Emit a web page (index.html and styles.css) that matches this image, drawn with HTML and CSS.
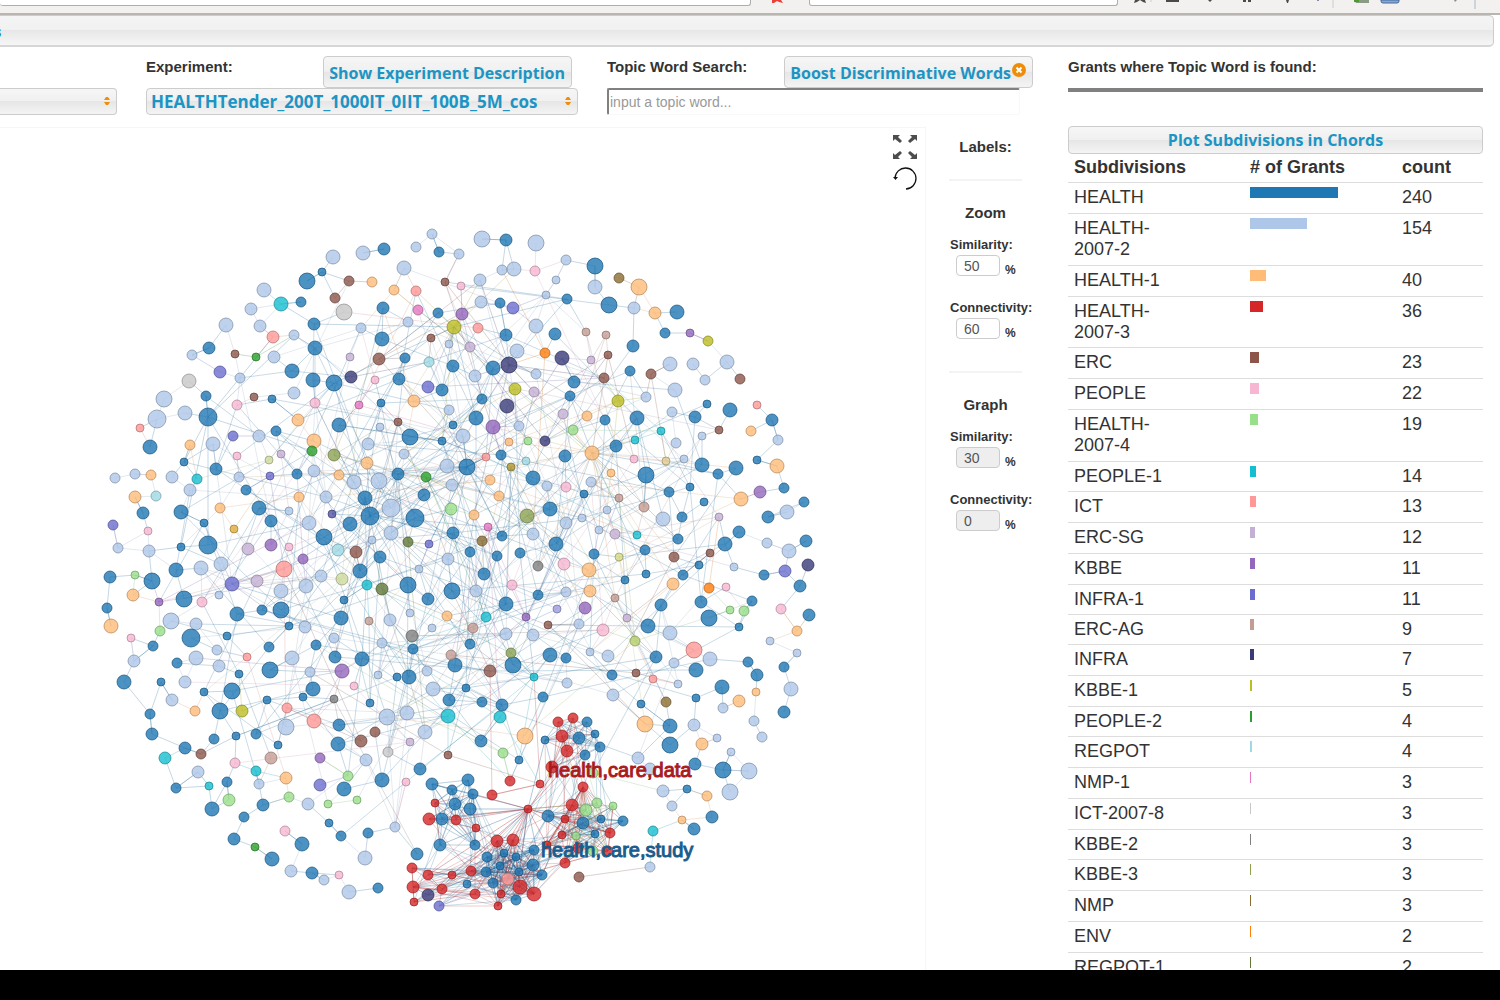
FILE: index.html
```html
<!DOCTYPE html>
<html lang="en">
<head>
<meta charset="utf-8">
<title>Topic graph</title>
<link rel="stylesheet" href="styles.css">
</head>
<body>
<div class="toolbar">
  <div class="url-field"></div>
  <svg class="stop-icon" width="14" height="4" viewBox="0 0 14 4"><path d="M2 0h9l2 3-4-1-2 -1-3 2-2 0z" fill="#e8413c"/></svg>
  <div class="find-field"></div>
  <svg class="toolbar-icons" width="382" height="14" viewBox="0 0 382 14">
    <g fill="#4a4a4a">
      <path d="M17 0l-1 3 3-1 3-2 3 2 3 1-1-3z"/>
      <path d="M48 0h13v2H48zM90 0h4l-2 2zM125 0h3v2h-3zM130 0h3v2h-3zM168 0h3l-1 3h-1z"/>
    </g>
    <path d="M199 0h2v1h-2zM336 0h3l-2 2z" fill="#8a8aa0"/>
    <path d="M236 0h15v3h-13z" fill="#8b9b86"/>
    <path d="M236 0h5v2h-5z" fill="#4d9a2d"/>
    <path d="M263 0h18v1q0 2-2 2h-14q-2 0-2-2z" fill="#86a9d4" stroke="#44699c"/>
    <path d="M33 0v2M215 0v8" stroke="#d0cdca"/>
    <path d="M357 0v9" stroke="#a9b8c8"/>
  </svg>
</div>
<nav class="ribbon"><a href="#topics">s</a></nav>

<form class="filters">
  <div class="filter">
    <div class="filter-head"></div>
    <div class="picker"><select aria-label="Collection"><option></option></select>
      <svg class="picker-arrows" width="6" height="8" viewBox="0 0 6 8"><path d="M0 3l2-3h2l2 3zM0 5h6l-2 3h-2z"/></svg></div>
  </div>
  <div class="filter">
    <div class="filter-head"><label for="experiment">Experiment:</label><button type="button" class="btn">Show Experiment Description</button></div>
    <div class="picker"><select id="experiment"><option>HEALTHTender_200T_1000IT_0IIT_100B_5M_cos</option></select>
      <svg class="picker-arrows" width="6" height="8" viewBox="0 0 6 8"><path d="M0 3l2-3h2l2 3zM0 5h6l-2 3h-2z"/></svg></div>
  </div>
  <div class="filter">
    <div class="filter-head"><label for="word">Topic Word Search:</label><button type="button" class="btn btn-boost">Boost Discriminative Words<svg width="14" height="14" viewBox="0 0 14 14"><circle cx="7" cy="7" r="7" fill="#ef8c08"/><path d="M4.500 4.500l5 5M9.500 4.500l-5 5" stroke="#fff" stroke-width="2"/></svg></button></div>
    <input id="word" class="word" type="text" placeholder="input a topic word...">
  </div>
  <div class="filter">
    <div class="filter-head"><span>Grants where Topic Word is found:</span></div>
    <hr class="rule">
  </div>
</form>

<main class="content">
  <section class="graph">
    <svg id="graph" viewBox="0 128 925 842" preserveAspectRatio="xMinYMin meet" role="img" aria-label="Topic similarity graph"></svg>
    <div class="graph-tools">
      <button type="button" aria-label="Full screen"><svg width="24" height="24" viewBox="0 0 24 24" fill="#4d4d4d"><path d="M0 0h7l-2 2 4 4-2 2-5-4-2 2zM24 0h-7l2 2-4 4 2 2 5-4 2 2zM0 24h7l-2-2 4-4-2-2-5 4-2-2zM24 24h-7l2-2-4-4 2-2 5 4 2-2z"/></svg></button>
      <button type="button" aria-label="Reset"><svg width="24" height="24" viewBox="0 0 24 24"><path d="M2 11A10.500 10.500 0 1 1 13 22" fill="none" stroke="#111" stroke-width="1.300"/><path d="M0 10h5l-2.500 3z" fill="#111"/></svg></button>
    </div>
  </section>

  <aside class="labels">
    <h2>Labels:</h2>
    <hr>
    <h2>Zoom</h2>
    <div class="setting"><label for="zs">Similarity:</label><div><input id="zs" type="text" value="50"><span>%</span></div></div>
    <div class="setting"><label for="zc">Connectivity:</label><div><input id="zc" type="text" value="60"><span>%</span></div></div>
    <hr class="hr-late">
    <h2>Graph</h2>
    <div class="setting"><label for="gs">Similarity:</label><div><input id="gs" type="text" value="30" disabled><span>%</span></div></div>
    <div class="setting"><label for="gc">Connectivity:</label><div><input id="gc" type="text" value="0" disabled><span>%</span></div></div>
  </aside>

  <section class="grants">
    <button type="button" class="btn btn-wide">Plot Subdivisions in Chords</button>
    <table>
      <thead><tr><th class="c-name">Subdivisions</th><th class="c-bar"># of Grants</th><th>count</th></tr></thead>
      <tbody id="rows"></tbody>
    </table>
  </section>
</main>
<footer class="strip"></footer>
<script src="graph.js"></script>
</body>
</html>
```
FILE: styles.css
```css
* { box-sizing: border-box; }
body {
  margin: 0;
  height: 100vh;
  display: flex;
  flex-direction: column;
  overflow: hidden;
  background: #fff;
  color: #333;
  font: 15px/20px "Liberation Sans", Arial, sans-serif;
}
button, input, select { margin: 0; font: inherit; }
h2 { margin: 0; font-size: 15px; line-height: 20px; text-align: center; }

.toolbar {
  flex: none;
  height: 15px;
  display: flex;
  align-items: flex-start;
  background: #f2f1ef;
  border-bottom: 2px solid #b9b6b2;
}
.url-field, .find-field {
  height: 6px;
  background: #fff;
  border: 1px solid #b0aeab;
  border-top: 0;
  border-radius: 0 0 3px 3px;
}
.url-field { flex: 1 1 0; border-left: 0; }
.stop-icon { margin: 0 25px 0 19px; }
.find-field { width: 309px; }

.ribbon {
  flex: none;
  height: 32px;
  margin-right: 6px;
  padding: 7px 0;
  overflow: hidden;
  border: 1px solid #ccc;
  border-bottom: 2px solid #d6d6d6;
  border-left: 0;
  border-radius: 0 5px 5px 0;
  background: linear-gradient(#f4f4f4 0%, #f1f1f1 48%, #e7e7e7 50%, #f6f6f6 100%);
}
.ribbon a {
  display: block;
  margin-left: -6px;
  color: #1c94c4;
  font-family: "Trebuchet MS", "Open Sans", sans-serif;
  font-weight: 700;
  line-height: 16px;
  text-decoration: none;
}

.filters {
  flex: none;
  display: grid;
  grid-template-columns: 117fr 432fr 432fr 432fr;
  column-gap: 29px;
  padding: 9px 0 11px;
}
.filter { min-width: 0; }
.filter-head {
  display: flex;
  justify-content: space-between;
  height: 32px;
  font-weight: bold;
  white-space: nowrap;
}
.filter-head label, .filter-head span { padding-top: 1px; }
.btn {
  height: 32px;
  margin-right: 6px;
  padding: 1px 6px 0 5px;
  border: 1px solid #ccc;
  border-radius: 4px;
  background: linear-gradient(#f6f6f6 0%, #f0f0f0 48%, #e6e6e6 50%, #f4f4f4 100%);
  color: #1c94c4;
  font: 700 16px/20px "Trebuchet MS", "Open Sans", sans-serif;
  white-space: nowrap;
}
.btn-boost svg { margin-left: 1px; vertical-align: 2px; }
.btn-wide { display: block; width: 100%; height: 28px; margin: 0; padding: 0; }
.picker { position: relative; }
.picker select {
  display: block;
  width: 100%;
  height: 27px;
  padding: 0 4px;
  appearance: none;
  border: 1px solid #ccc;
  border-radius: 4px;
  background: linear-gradient(#f6f6f6 0%, #f0f0f0 48%, #e6e6e6 50%, #f4f4f4 100%);
  color: #1c94c4;
  font: 700 17px/20px "Trebuchet MS", "Open Sans", sans-serif;
}
.filter:first-child select { border-left: 0; border-radius: 0 4px 4px 0; }
.picker-arrows { position: absolute; right: 7px; top: 9px; fill: #ef8c08; }
.word {
  display: block;
  width: calc(100% - 19px);
  height: 27px;
  padding: 0 1px;
  border: 1px solid #f8f8f8;
  border-top: 2px solid #808080;
  border-left: 2px solid #808080;
  border-radius: 2px;
  font-size: 14px;
}
.word::placeholder { color: #999; opacity: 1; }
.rule { height: 4px; margin: 0 17px 0 0; border: 0; background: #808080; }

.content {
  flex: 1 1 0;
  min-height: 0;
  display: grid;
  grid-template-columns: 925fr 114fr 461fr;
  overflow: hidden;
}
.graph {
  position: relative;
  min-width: 0;
  margin-top: 1px;
  border-top: 1px solid #fdf3f3;
}
.graph > svg { display: block; width: 100%; }
.graph-tools {
  position: absolute;
  top: 7px;
  right: 8px;
  display: flex;
  flex-direction: column;
  gap: 8px;
}
.graph-tools button { padding: 0; border: 0; background: none; }
.graph-tools svg { display: block; }

.labels { min-width: 0; padding: 11px 17px 0 23px; border-left: 1px solid #fdf3f3; }
.labels hr { height: 2px; margin: 22px 0; border: 0; background: #f3f3f3; }
.labels .hr-late { margin-top: 32px; }
.setting { margin-top: 12px; font-size: 13px; font-weight: bold; white-space: nowrap; }
.setting + .setting { margin-top: 22px; }
.setting label { display: block; padding-left: 1px; }
.setting div { display: flex; align-items: flex-start; gap: 5px; height: 21px; padding-left: 7px; }
.setting span { padding-top: 5px; font-size: 12px; }
.setting input {
  width: 44px;
  height: 21px;
  padding: 0 7px;
  border: 1px solid #ccc;
  border-radius: 4px;
  background: #fff;
  color: #555;
  font-size: 14px;
  font-weight: normal;
}
.setting input:disabled { background: #eee; }

.grants { min-width: 0; padding: 0 17px 0 29px; }
table {
  width: 100%;
  table-layout: fixed;
  border-collapse: separate;
  border-spacing: 0;
  font-size: 18px;
  line-height: 21px;
}
th, td {
  padding: 4px 0 5px;
  border-bottom: 1px solid #ddd;
  text-align: left;
  vertical-align: top;
}
th { padding: 3px 0 4px; white-space: nowrap; }
tr:nth-child(4n) td, tr:nth-child(13) td { padding-bottom: 4px; }
th.c-name, td.c-name { width: 182px; padding-left: 6px; }
.c-bar { width: 152px; }
td.c-name { padding-right: 60px; }
.bar { display: block; height: 11px; }

.strip { flex: none; height: 30px; background: #000; }

#graph circle { fill-opacity: .8; stroke-opacity: .7; stroke-width: 1; }
#graph line { stroke-width: 1; }
#graph text { font-size: 20px; stroke-width: 1; }
```
FILE: graph.js
```js
const NS = 'http://www.w3.org/2000/svg';

// Grants per subdivision: name, count, bar colour, bar width in pixels
const rows = [
  ['HEALTH', 240, '#1f77b4', 88], ['HEALTH-2007-2', 154, '#aec7e8', 57],
  ['HEALTH-1', 40, '#ffbb78', 16], ['HEALTH-2007-3', 36, '#d62728', 13],
  ['ERC', 23, '#8c564b', 9], ['PEOPLE', 22, '#f7b6d2', 9],
  ['HEALTH-2007-4', 19, '#98df8a', 8], ['PEOPLE-1', 14, '#17becf', 6],
  ['ICT', 13, '#ff9896', 6], ['ERC-SG', 12, '#c5b0d5', 5],
  ['KBBE', 11, '#9467bd', 5], ['INFRA-1', 11, '#6b6ecf', 5],
  ['ERC-AG', 9, '#c49c94', 4], ['INFRA', 7, '#393b79', 4],
  ['KBBE-1', 5, '#bcbd22', 2], ['PEOPLE-2', 4, '#2ca02c', 2],
  ['REGPOT', 4, '#9edae5', 2], ['NMP-1', 3, '#e377c2', 1],
  ['ICT-2007-8', 3, '#c7c7c7', 1], ['KBBE-2', 3, '#7f7f7f', 1],
  ['KBBE-3', 3, '#8ca252', 1], ['NMP', 3, '#8c6d31', 1],
  ['ENV', 2, '#ff7f0e', 1], ['REGPOT-1', 2, '#637939', 1]
];
document.getElementById('rows').innerHTML = rows.map(([name, count, color, width]) =>
  `<tr><td class="c-name">${name}</td><td><span class="bar" style="width:${width}px;background:${color}"></span></td><td>${count}</td></tr>`
).join('');

// Nodes by colour: x,y,radius
const nodeData = {
  '#aec7e8': `333,257,7 264,290,7 251,309,6 226,325,7 260,326,6 192,355,5 294,335,5 274,357,6 240,378,5 164,399,8 157,419,9 185,413,7 294,393,6 259,436,6 213,444,7 115,478,5 135,474,5 172,477,6 239,477,5 314,471,6
363,253,7 432,234,5 416,247,5 482,239,8 536,243,8 459,254,5 404,268,7 502,270,5 514,269,7 480,280,6 566,260,5 556,280,4 546,295,4 481,302,6 595,287,7 408,322,5 361,328,5 449,344,4 536,326,7 517,351,7 475,376,6 536,374,5 449,410,5 380,427,4 463,436,7 519,426,5 368,444,6 404,454,5 447,466,7
634,308,6 670,364,7 693,364,6 727,362,7 705,380,5 646,397,5 675,390,7 672,412,5 702,436,4 676,443,5 684,459,4 778,440,5 591,482,5
190,490,6 289,511,4 326,497,6 309,523,7 118,548,5 149,551,6 201,568,7 221,564,7 281,591,7 306,586,7 321,576,6 219,595,4 171,621,8 196,624,6 305,627,6 334,638,5 217,650,5 196,658,7 219,666,6 292,658,7 134,661,6 185,682,6 310,672,5 172,700,6
354,482,7 379,481,8 452,485,6 391,508,9 391,533,7 372,540,4 448,559,6 419,569,4 547,486,5 566,523,6 582,518,4 533,534,6 476,591,6 566,592,5 410,613,4 390,620,6 432,628,4 382,643,5 506,634,6 533,635,6 579,624,5 590,652,4 378,675,4 427,671,5 433,689,7 567,683,5 599,530,4
607,510,4 663,519,7 787,512,7 767,543,5 789,551,7 734,567,4 670,633,7 608,656,6 674,663,5 710,659,7 770,641,4 797,653,4 678,684,4 613,695,6 723,708,5 754,721,5 791,689,7 762,737,5 694,725,6 717,738,4 731,752,4 638,758,6 650,769,6 749,771,8 730,792,8 663,791,6 672,806,5 650,867,5
198,772,6 286,727,8 259,784,5 308,804,6 366,760,6 387,717,8 407,713,7 425,732,7 365,858,7 395,827,5 291,871,6 324,880,5 349,892,7`,
  '#1f77b4': `322,272,4 307,281,8 301,302,5 314,324,6 315,348,7 209,348,6 292,371,7 313,380,7 334,383,8 206,396,5 272,399,4 208,417,9 339,425,7 276,431,5 150,447,7 184,462,4 216,469,6 297,474,5
384,249,6 439,252,5 506,240,6 595,266,8 383,308,6 438,313,5 500,303,5 567,299,5 382,339,7 506,335,6 555,334,6 405,358,5 453,366,6 493,368,7 399,379,6 442,390,6 574,382,6 570,396,5 482,399,5 381,403,4 476,418,7 453,425,4 410,437,8 442,441,4 501,455,5 565,456,6 467,467,8 398,474,6 533,478,7
609,305,8 677,312,7 665,333,5 633,346,6 630,371,5 605,420,5 637,418,7 695,417,6 707,404,4 730,410,7 772,420,6 616,446,6 702,465,7 718,474,5 736,468,7 757,460,4 646,475,8 669,492,5 690,487,4 784,488,5 584,494,4
246,490,5 143,513,6 181,512,7 259,508,7 204,523,4 271,521,6 324,537,8 181,547,4 208,545,9 110,577,6 176,570,7 152,581,8 107,608,5 184,599,8 237,614,7 262,610,5 281,610,8 341,618,7 191,638,9 153,646,5 289,626,4 227,636,4 269,647,5 316,645,5 335,657,6 177,663,5 124,682,7 161,682,4 239,674,4 270,670,8 204,692,4 232,691,8 267,700,4 313,689,7 303,697,4 220,711,8 344,600,4
365,498,7 370,516,9 350,524,7 424,495,6 415,518,9 550,509,7 453,533,6 502,536,5 556,544,7 380,557,6 470,552,5 497,556,5 520,553,5 594,554,5 360,571,7 484,574,6 408,585,8 452,591,8 428,599,6 506,604,7 538,595,5 413,649,5 470,644,5 362,659,7 455,665,7 513,665,8 550,655,7 566,658,5 409,677,7 397,677,4 466,688,4 449,700,6 482,702,5 502,705,6 370,703,4 543,697,5
682,517,5 704,502,4 768,517,6 804,502,5 739,532,6 725,544,7 678,539,5 645,550,5 625,580,4 646,574,4 683,575,5 699,565,4 764,575,5 806,541,6 800,586,6 661,605,6 701,602,6 709,618,8 752,601,5 739,627,4 809,615,6 648,626,7 656,657,6 748,662,5 784,667,5 757,675,6 696,670,7 722,687,7 612,675,5 696,698,4 641,704,4 784,712,6 670,726,7 670,745,8 695,764,6 723,770,8 687,789,4 712,817,6 694,829,6
150,714,5 152,734,6 185,748,6 214,739,5 236,736,4 256,734,5 278,745,4 339,725,6 338,744,7 176,788,5 227,782,5 212,809,7 244,817,5 263,805,6 344,789,7 329,823,4 341,836,5 302,844,7 234,839,6 272,859,7 312,873,6 378,888,5 368,833,5 382,780,7 420,769,6 432,784,6 481,741,6 519,760,4 417,854,6 440,845,6 475,845,5 468,780,6 452,790,5 473,794,5 455,804,6 470,809,6 442,819,6 548,816,6
545,740,4 587,722,5 579,738,6 595,734,4 600,747,5 585,755,5 583,823,6 601,819,4 623,821,5 595,834,4 487,857,5 504,853,4 516,857,4 534,850,5 533,865,6 500,866,4 486,872,5 519,872,4 542,875,5 493,883,5 467,884,4 516,900,5`,
  '#ffbb78': `298,420,6 314,441,7 190,445,5 151,475,5 339,475,5 372,282,5 394,290,5 414,401,6 367,463,6 509,442,4 587,416,5 592,453,7 639,287,8 655,313,6 751,431,5 611,473,4 777,466,7 741,499,7 135,497,6 220,508,5 299,497,5 133,595,6 111,626,7 195,711,5 490,480,5 499,496,5 474,515,5 447,616,5 589,570,7 590,591,6 673,584,6 797,631,5 739,701,6 756,692,4 645,724,8 702,744,6 707,796,5 682,820,4 286,778,6 525,736,8`,
  '#d62728': `558,722,5 573,718,5 562,736,6 567,751,6 552,767,6 540,784,4 510,781,5 492,795,5 435,803,4 429,819,6 456,820,5 476,828,4 528,809,4 583,787,5 572,805,6 565,819,4 562,835,4 610,833,5 547,845,4 578,848,5 608,851,5 565,863,5 497,841,6 513,840,6 412,868,5 428,875,5 452,875,4 471,871,5 413,887,6 442,889,5 414,902,4 475,894,5 501,894,4 520,887,7 534,894,7 498,906,4`,
  '#8c564b': `335,298,5 349,281,5 235,354,4 254,397,4 445,282,4 431,338,4 379,359,6 398,422,4 608,355,4 604,378,5 651,374,5 740,379,5 719,430,4 356,552,6 548,625,4 490,671,6 674,557,5 710,553,4 636,673,4 201,754,5 361,741,6 375,732,5 448,755,4 579,877,5`,
  '#f7b6d2': `237,405,5 315,403,5 237,456,4 461,286,4 535,271,5 375,380,4 634,459,4 148,531,4 202,602,5 289,547,4 131,638,4 566,487,5 564,564,6 512,585,5 354,686,4 603,630,6 726,587,4 781,609,5 235,763,5 285,831,5 406,782,4 339,875,4`,
  '#98df8a': `528,441,4 573,430,5 135,575,4 160,631,5 451,509,6 730,610,4 744,611,5 229,800,6 289,797,5 348,776,5 357,800,4 328,804,4 503,753,5 597,803,5 613,806,4 586,810,6 576,836,4 593,773,5 593,851,5`,
  '#17becf': `281,304,7 197,479,5 661,431,4 635,440,4 367,585,5 486,617,5 534,677,4 637,535,4 653,831,5 165,758,6 209,786,4 256,771,5 448,716,7 500,717,6`,
  '#ff9896': `273,337,6 140,428,4 416,291,5 478,328,5 486,457,4 757,405,4 284,569,8 247,657,4 287,708,5 694,650,8 653,679,4 314,721,7 508,879,6`,
  '#c5b0d5': `281,454,4 350,357,4 470,347,5 534,392,5 563,414,5 591,360,4 248,549,6 257,581,6 615,534,5 719,517,4 627,618,4 410,742,4`,
  '#9467bd': `462,314,6 493,427,7 690,333,4 760,492,6 159,602,4 271,545,6 303,559,5 342,671,7 526,617,4 585,608,6 320,758,5`,
  '#6b6ecf': `220,372,6 233,436,5 270,476,4 513,308,6 428,387,6 113,525,5 232,584,7 429,544,4 785,571,6 320,785,6 439,906,5`,
  '#9c9ede': '557,609,4',
  '#c49c94': `586,332,4 606,335,4 619,498,4 369,621,4 473,628,5 451,655,5 644,507,5 615,598,4 271,758,6`,
  '#393b79': `351,377,6 509,365,8 507,406,7 562,358,7 545,441,5 808,565,6 428,895,6`,
  '#5254a3': '332,514,4',
  '#bcbd22': `454,327,7 515,389,6 708,341,5 618,401,6 242,711,6`,
  '#2ca02c': `256,357,4 312,451,5 426,477,5 255,847,4`,
  '#9edae5': `429,362,5 526,461,4 156,496,5 338,550,6`,
  '#e377c2': `418,310,5 359,405,4 488,527,4`,
  '#c7c7c7': `189,381,7 344,312,8 388,752,5`,
  '#7f7f7f': `334,699,4 538,566,5 412,636,6`,
  '#8ca252': `334,455,6 527,516,7 511,653,5`,
  '#8c6d31': `619,278,5 482,541,5 666,702,5`,
  '#ff7f0e': `545,353,5 709,588,5`,
  '#637939': `408,542,5 382,589,6`,
  '#b5cf6b': '635,641,5',
  '#cedb9c': '269,460,4 342,579,6',
  '#d5da82': '619,557,4',
  '#dfc990': '666,461,4',
  '#ad9430': '511,467,4',
  '#dfae3d': '234,529,4'
};
const nodes = [];
for (const [color, list] of Object.entries(nodeData)) {
  for (const item of list.split(/\s+/)) {
    const [x, y, r] = item.split(',').map(Number);
    nodes.push({ x, y, r, color });
  }
}

// Repeatable pseudo-random numbers, so that the links are the same on every load
let seed = 11;
const random = () => (seed = (seed * 16807) % 2147483647) / 2147483647;
const distance = (a, b) => Math.hypot(a.x - b.x, a.y - b.y);
const links = [];
const link = (a, b, opacity) => links.push({ a, b, opacity });

// Tight communities: [x from, x to, y from, y to, share of pairs linked]
const groups = [
  [540, 603, 712, 772, .8],
  [545, 625, 780, 865, .7],
  [426, 480, 776, 848, .65],
  [484, 545, 838, 910, .9],
  [408, 483, 860, 910, .3]
].map(([x1, x2, y1, y2, share]) => ({
  share,
  members: nodes.filter(n => n.x >= x1 && n.x <= x2 && n.y >= y1 && n.y <= y2)
}));
const grouped = new Set(groups.flatMap(g => g.members));
for (const { members, share } of groups) {
  members.forEach((a, i) => members.slice(i + 1).forEach(b => {
    if (random() < share) link(a, b, .3);
  }));
}
const hub = nodes.find(n => n.x === 528 && n.y === 809);
for (const n of grouped) if (random() < .4) link(hub, n, .35);
const [upper, east, west, lower, corner] = groups.map(g => g.members);
const bridge = (from, to, share) => from.forEach(a => to.forEach(b => {
  if (random() < share) link(a, b, .22);
}));
bridge(upper, east, .12);
bridge(upper, lower, .04);
bridge(west, lower, .1);
bridge(west, corner, .05);
bridge(east, lower, .1);
bridge(corner, lower, .3);

// Everything else: sparse at the rim, long links inside
const centre = { x: 455, y: 560 };
const free = nodes.filter(n => !grouped.has(n) && n !== hub);
for (const n of free) {
  const near = free.filter(m => m !== n).sort((a, b) => distance(n, a) - distance(n, b));
  const off = distance(n, centre);
  if (off > 285) {
    link(n, near[0], .25);
    if (random() < .4) link(n, near[2], .25);
  } else {
    link(n, near[1 + Math.floor(random() * 5)], .25);
    const extra = off < 210 ? 2 : 1;
    for (let i = 0; i < extra; i++) {
      const m = near[8 + Math.floor(random() * (off < 210 ? 170 : 70))];
      if (distance(m, centre) < 300) link(n, m, .23);
    }
  }
}
for (const [x, y] of [[370, 516], [509, 365], [592, 453], [534, 677], [454, 327], [208, 417], [232, 584], [467, 467]]) {
  const n = nodes.find(m => m.x === x && m.y === y);
  free.filter(m => distance(m, n) < 150 && distance(m, centre) < 300).forEach(m => { if (random() < .12) link(n, m, .25); });
}

const svg = document.getElementById('graph');
const add = (tag, attrs, text) => {
  const el = document.createElementNS(NS, tag);
  for (const key in attrs) el.setAttribute(key, attrs[key]);
  if (text) el.textContent = text;
  svg.appendChild(el);
};
const shade = (hex, by) => '#' + [1, 3, 5].map(i => Math.round(parseInt(hex.slice(i, i + 2), 16) * by).toString(16).padStart(2, '0')).join('');
// A link takes the colour of one of its ends, blue before any other
const linkColor = (a, b) => {
  const blue = [a, b].some(n => n.color === '#1f77b4');
  return blue && random() < .6 ? '#1f77b4' : (random() < .5 ? a : b).color;
};
for (const { a, b, opacity } of links) {
  add('line', { x1: a.x, y1: a.y, x2: b.x, y2: b.y, stroke: shade(linkColor(a, b), .82), 'stroke-opacity': opacity });
}
for (const n of nodes) add('circle', { cx: n.x, cy: n.y, r: n.r, fill: n.color, stroke: shade(n.color, .7) });
add('text', { x: 548, y: 777, fill: '#a81c1f', stroke: '#a81c1f' }, 'health,care,data');
add('text', { x: 541, y: 857, fill: '#1b5c8c', stroke: '#1b5c8c' }, 'health,care,study');
```
